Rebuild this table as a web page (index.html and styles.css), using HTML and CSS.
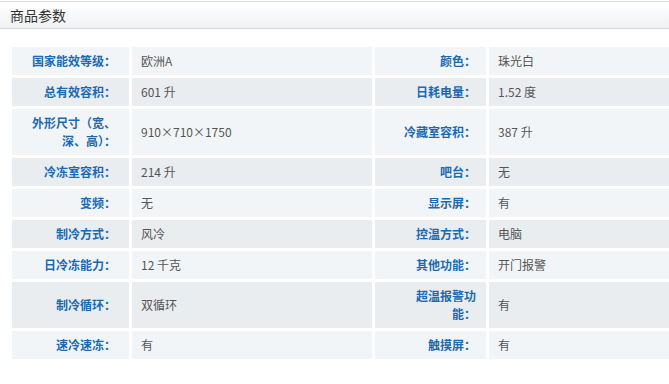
FILE: index.html
```html
<!DOCTYPE html>
<html lang="zh">
<head>
<meta charset="utf-8">
<link rel="stylesheet" href="styles.css">
</head>
<body>
<div class="panel">
  <div class="panel-head"><h2 class="panel-title">商品参数</h2></div>
  <div class="panel-body">
    <table class="spec">
      <colgroup>
        <col class="c1"><col class="c2"><col class="c3"><col class="c4">
      </colgroup>
      <tr class="odd">
        <th class="k k1">国家能效等级：</th><td class="v">欧洲A</td>
        <th class="k k3">颜色：</th><td class="v">珠光白</td>
      </tr>
      <tr class="even">
        <th class="k k1">总有效容积：</th><td class="v">601 升</td>
        <th class="k k3">日耗电量：</th><td class="v">1.52 度</td>
      </tr>
      <tr class="odd">
        <th class="k k1">外形尺寸（宽、深、高）：</th><td class="v">910×710×1750</td>
        <th class="k k3">冷藏室容积：</th><td class="v">387 升</td>
      </tr>
      <tr class="even">
        <th class="k k1">冷冻室容积：</th><td class="v">214 升</td>
        <th class="k k3">吧台：</th><td class="v">无</td>
      </tr>
      <tr class="odd">
        <th class="k k1">变频：</th><td class="v">无</td>
        <th class="k k3">显示屏：</th><td class="v">有</td>
      </tr>
      <tr class="even">
        <th class="k k1">制冷方式：</th><td class="v">风冷</td>
        <th class="k k3">控温方式：</th><td class="v">电脑</td>
      </tr>
      <tr class="odd">
        <th class="k k1">日冷冻能力：</th><td class="v">12 千克</td>
        <th class="k k3">其他功能：</th><td class="v">开门报警</td>
      </tr>
      <tr class="even">
        <th class="k k1">制冷循环：</th><td class="v">双循环</td>
        <th class="k k3">超温报警功能：</th><td class="v">有</td>
      </tr>
      <tr class="odd">
        <th class="k k1">速冷速冻：</th><td class="v">有</td>
        <th class="k k3">触摸屏：</th><td class="v">有</td>
      </tr>
    </table>
  </div>
</div>
</body>
</html>
```

FILE: styles.css
```css
html, body {
  margin: 0;
  padding: 0;
  background: #fff;
  overflow: hidden;
}
body {
  font-family: "Noto Sans CJK SC", "Liberation Sans", sans-serif;
  font-size: 12px;
}
.panel-head {
  margin-top: 1px;
  height: 26px;
  border-top: 1px solid #dcdcdc;
  border-bottom: 1px solid #d2d6d9;
  background: linear-gradient(#ffffff, #eff2f4);
  display: flex;
  align-items: center;
  padding-left: 10px;
}
.panel-title {
  margin: 0;
  font-size: 14px;
  font-weight: normal;
  color: #333;
  line-height: 18px;
}
.panel-body {
  padding: 15px 0 0 9px;
  overflow: hidden;
}
.spec {
  border-collapse: separate;
  border-spacing: 3px;
  table-layout: fixed;
  width: 700px;
}
.c1 { width: 117px; }
.c2 { width: 240px; }
.c3 { width: 111px; }
.c4 { width: 217px; }
.spec th, .spec td {
  line-height: 18px;
  padding-top: 5px;
  padding-bottom: 5px;
  vertical-align: middle;
}
.k {
  text-align: right;
  font-weight: bold;
  color: #1a6ab2;
}
.k1 {
  padding-left: 14px;
  padding-right: 13px;
}
.k3 {
  padding-left: 22px;
  padding-right: 10px;
}
.v {
  text-align: left;
  color: #555;
  padding-left: 9px;
  padding-right: 6px;
}
.odd th, .odd td { background: #f2f5f7; }
.even th, .even td { background: #e9edf0; }
```
